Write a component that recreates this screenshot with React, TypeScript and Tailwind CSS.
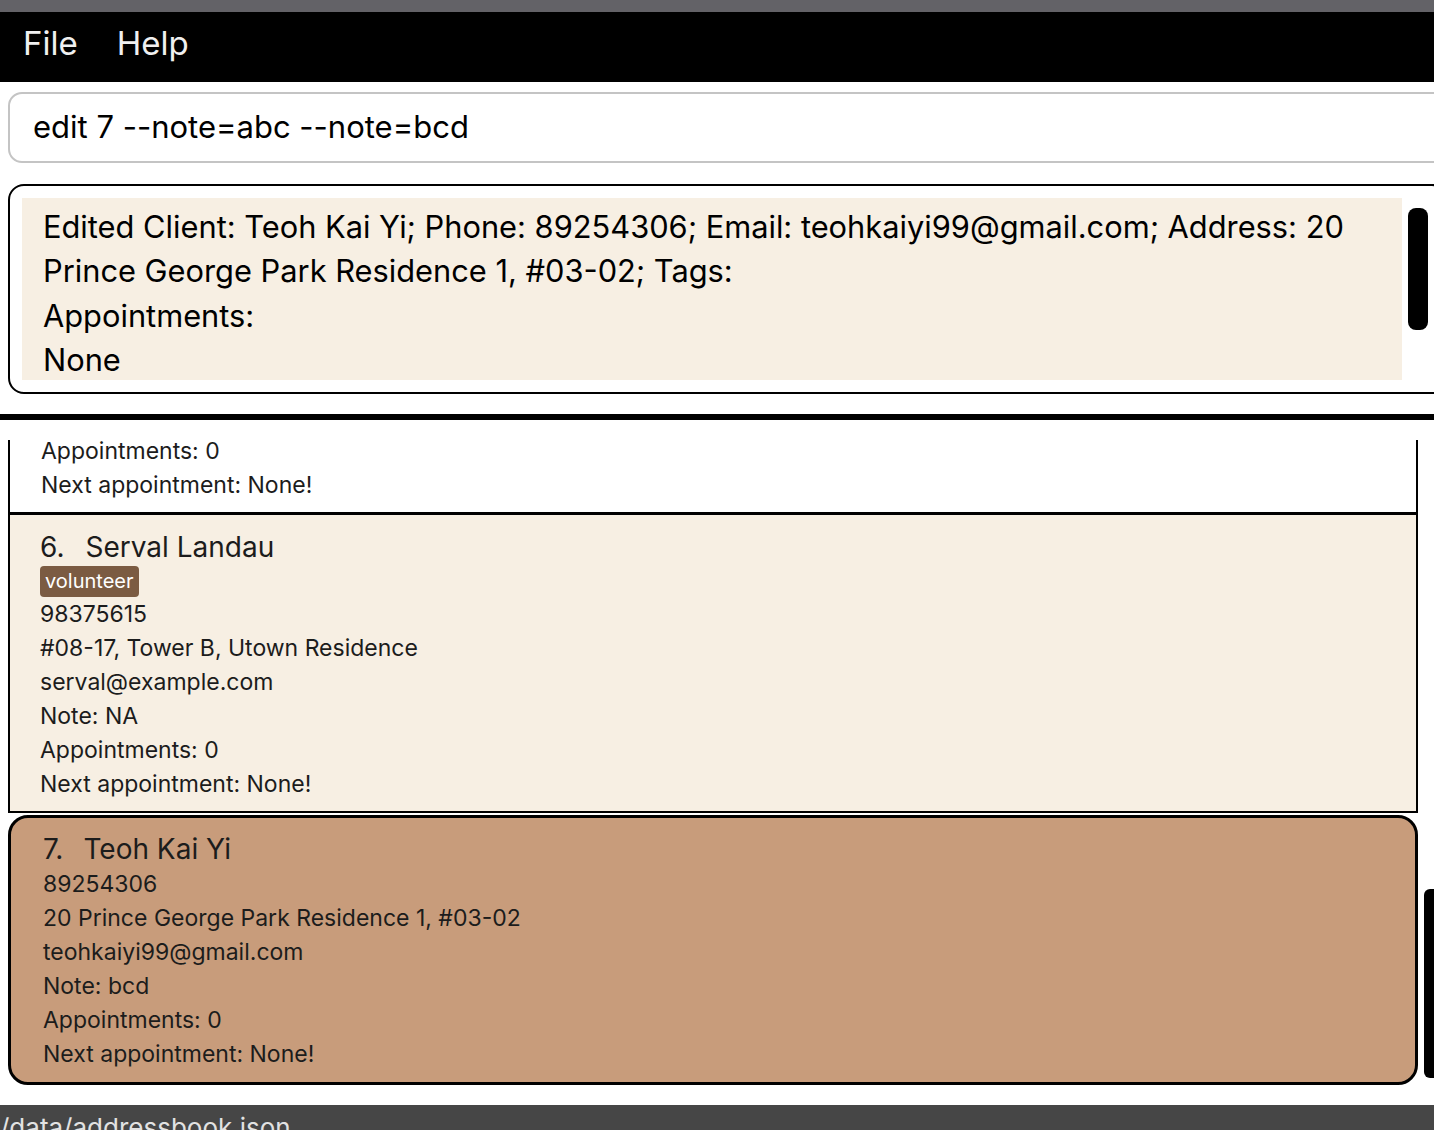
const selected = {
  index: 7,
  name: "Teoh Kai Yi",
  lines: [
    "89254306",
    "20 Prince George Park Residence 1, #03-02",
    "teohkaiyi99@gmail.com",
    "Note: bcd",
    "Appointments: 0",
    "Next appointment: None!",
  ],
};

const serval = {
  index: 6,
  name: "Serval Landau",
  tags: ["volunteer"],
  lines: [
    "98375615",
    "#08-17, Tower B, Utown Residence",
    "serval@example.com",
    "Note: NA",
    "Appointments: 0",
    "Next appointment: None!",
  ],
};

export default function App() {
  return (
    <div className="w-[1434px] h-[1130px] overflow-hidden bg-white flex flex-col font-['Inter',sans-serif] text-[#1c1c1c]">
      {/* window strip */}
      <div className="h-[12px] shrink-0 bg-[#636267]" />

      {/* menu */}
      <div className="h-[70px] shrink-0 bg-black flex items-start gap-[39px] pl-[23px] pt-[11px] text-[33px] leading-[40px] text-[#f0f0f0]">
        <span>File</span>
        <span>Help</span>
      </div>

      {/* command box */}
      <div className="mt-[10px] ml-[8px] w-[1440px] h-[71px] shrink-0 border-2 border-[#c4c4c4] rounded-[14px] flex items-center pl-[23px] text-[31px] text-black">
        edit 7 --note=abc --note=bcd
      </div>

      {/* result */}
      <div className="mt-[21px] ml-[8px] w-[1440px] h-[210px] shrink-0 border-2 border-black rounded-[16px] p-[12px] flex gap-[6px]">
        <div className="w-[1380px] h-[182px] shrink-0 bg-[#f7efe3] pl-[21px] pt-[7px] text-[30.8px] leading-[44.3px] text-black whitespace-nowrap overflow-hidden">
          Edited Client: Teoh Kai Yi; Phone: 89254306; Email: teohkaiyi99@gmail.com; Address: 20
          <br />
          Prince George Park Residence 1, #03-02; Tags:
          <br />
          Appointments:
          <br />
          None
        </div>
        <div className="mt-[10px] w-[20px] h-[122px] shrink-0 rounded-[8px] bg-black" />
      </div>

      <div className="mt-[20px] h-[6px] shrink-0 bg-black" />

      {/* client list */}
      <div className="mt-[20px] h-[645px] shrink-0 flex">
        <div className="ml-[8px] w-[1410px] shrink-0 overflow-hidden flex flex-col">
          {/* partially scrolled item 5 */}
          <div className="-mt-[6px] bg-white border-x-2 border-b-[3px] border-black pl-[31px] pb-[10px] text-[23px] leading-[34px]">
            <div>Appointments: 0</div>
            <div>Next appointment: None!</div>
          </div>

          <div className="bg-[#f7efe3] border-x-2 border-b-2 border-black pl-[30px] pt-[14px] pb-[10px] flex flex-col items-start">
            <div className="flex text-[28px] leading-[36px]">
              <span>{serval.index}.</span>
              <span className="ml-[21px]">{serval.name}</span>
            </div>
            {serval.tags.map((tag) => (
              <span
                key={tag}
                className="mt-[1px] h-[31px] px-[5px] rounded-[4px] bg-[#7b5b42] text-white text-[20px] leading-[31px]"
              >
                {tag}
              </span>
            ))}
            {serval.lines.map((line, i) => (
              <div key={i} className="text-[23px] leading-[34px]">
                {line}
              </div>
            ))}
          </div>

          <div className="mt-[2px] bg-[#c89c7b] border-[3px] border-black rounded-[20px] pl-[32px] pt-[13px] pb-[11px]">
            <div className="flex text-[28px] leading-[36px]">
              <span>{selected.index}.</span>
              <span className="ml-[20px]">{selected.name}</span>
            </div>
            {selected.lines.map((line, i) => (
              <div key={i} className="text-[23px] leading-[34px]">
                {line}
              </div>
            ))}
          </div>
        </div>

        {/* list scrollbar */}
        <div className="ml-[6px] mt-[449px] w-[16px] h-[189px] shrink-0 rounded-[6px] bg-black" />
      </div>

      {/* status bar */}
      <div className="mt-[20px] h-[25px] shrink-0 overflow-hidden bg-[#464646] pt-[7px] text-[26px] leading-[32px] text-[#e2e2e2] whitespace-nowrap">
        /data/addressbook.json
      </div>
    </div>
  );
}
